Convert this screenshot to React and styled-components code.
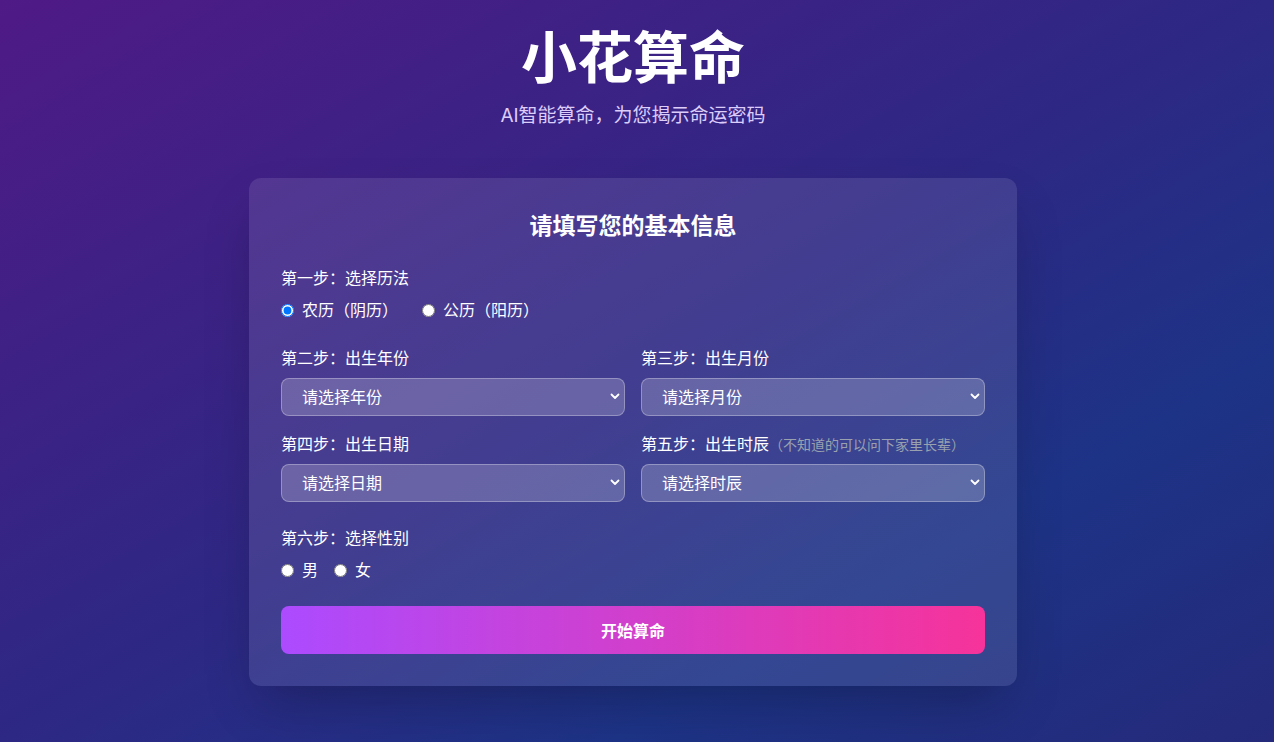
import styled, { createGlobalStyle } from "styled-components";

/* ---------- global ---------- */
const GlobalStyle = createGlobalStyle`
  * { box-sizing: border-box; }
  html, body { margin: 0; padding: 0; }
  body {
    font-family: "Inter", "Noto Sans CJK SC", sans-serif;
    color: #fff;
  }
`;

/* ---------- layout ---------- */
const Page = styled.div`
  min-height: 742px;
  background: linear-gradient(
    to bottom right,
    #4f1a86 0%,
    #2d2884 50%,
    #1d3386 74%,
    #252a7b 100%
  );
  padding: 30px 24px 32px 16px;
`;

const Header = styled.header`
  text-align: center;
  margin-bottom: 48px;
`;

const Title = styled.h1`
  margin: 0 0 16px;
  font-size: 56px;
  line-height: 1;
  font-weight: 700;
`;

const Subtitle = styled.p`
  margin: 0;
  font-size: 19px;
  line-height: 28px;
  color: #dccdfb;
`;

const Card = styled.section`
  width: 768px;
  margin: 0 auto;
  padding: 32px;
  border-radius: 12px;
  background: rgba(255, 255, 255, 0.1);
  box-shadow: 0 25px 50px -12px rgba(0, 0, 0, 0.25);
`;

const CardTitle = styled.h2`
  margin: 0 0 24px;
  text-align: center;
  font-size: 23px;
  line-height: 32px;
  font-weight: 700;
`;

const Step = styled.div`
  margin-bottom: ${(p) => p.$mb ?? 24}px;
`;

const Label = styled.div`
  font-size: 16px;
  line-height: 24px;
  height: 24px;
  margin-bottom: 8px;
`;

const Hint = styled.span`
  font-size: 14px;
  line-height: 1;
  color: #99a1af;
`;

const RadioRow = styled.div`
  display: flex;
  gap: ${(p) => p.$gap}px;
`;

const RadioLabel = styled.label`
  display: flex;
  align-items: center;
  gap: 8px;
  font-size: 16px;
  line-height: 24px;
`;

const Radio = styled.input`
  margin: 0;
  width: 13px;
  height: 13px;
`;

const Grid = styled.div`
  display: grid;
  grid-template-columns: 1fr 1fr;
  gap: 16px;
  margin-bottom: 24px;
`;

const SelectWrap = styled.div`
  position: relative;
`;

const Select = styled.select`
  appearance: none;
  width: 100%;
  height: 38px;
  padding: 0 28px 0 20px;
  border: 1px solid rgba(255, 255, 255, 0.3);
  border-radius: 8px;
  background: rgba(255, 255, 255, 0.2);
  color: #fff;
  font-family: inherit;
  font-size: 16px;
  outline: none;
`;

const Chevron = styled.svg`
  position: absolute;
  right: 5px;
  top: 15px;
  pointer-events: none;
`;

const Submit = styled.button`
  display: block;
  width: 100%;
  height: 48px;
  border: none;
  border-radius: 8px;
  background: linear-gradient(to right, #ac4bff, #f6339a);
  color: #fff;
  font-family: inherit;
  font-size: 16px;
  font-weight: 700;
  cursor: pointer;
`;

/* ---------- parts ---------- */
function Dropdown({ placeholder }) {
  return (
    <SelectWrap>
      <Select defaultValue="">
        <option value="">{placeholder}</option>
      </Select>
      <Chevron width="10" height="7" viewBox="0 0 10 7">
        <path d="M1.5 1.5 L5 5 L8.5 1.5" fill="none" stroke="#fff" strokeWidth="1.8" strokeLinecap="round" strokeLinejoin="round" />
      </Chevron>
    </SelectWrap>
  );
}

const fields = [
  { label: "第二步：出生年份", placeholder: "请选择年份" },
  { label: "第三步：出生月份", placeholder: "请选择月份" },
  { label: "第四步：出生日期", placeholder: "请选择日期" },
  { label: "第五步：出生时辰", hint: "（不知道的可以问下家里长辈）", placeholder: "请选择时辰" },
];

/* ---------- main ---------- */
export default function App() {
  return (
    <>
      <GlobalStyle />
      <Page>
        <Header>
          <Title>小花算命</Title>
          <Subtitle>AI智能算命，为您揭示命运密码</Subtitle>
        </Header>

        <Card>
          <CardTitle>请填写您的基本信息</CardTitle>

          <Step>
            <Label>第一步：选择历法</Label>
            <RadioRow $gap={24}>
              <RadioLabel>
                <Radio type="radio" name="calendar" defaultChecked />
                农历（阴历）
              </RadioLabel>
              <RadioLabel>
                <Radio type="radio" name="calendar" />
                公历（阳历）
              </RadioLabel>
            </RadioRow>
          </Step>

          <Grid>
            {fields.map(({ label, hint, placeholder }) => (
              <div key={label}>
                <Label>
                  {label}
                  {hint && <Hint>{hint}</Hint>}
                </Label>
                <Dropdown placeholder={placeholder} />
              </div>
            ))}
          </Grid>

          <Step>
            <Label>第六步：选择性别</Label>
            <RadioRow $gap={16}>
              <RadioLabel>
                <Radio type="radio" name="gender" />
                男
              </RadioLabel>
              <RadioLabel>
                <Radio type="radio" name="gender" />
                女
              </RadioLabel>
            </RadioRow>
          </Step>

          <Submit type="button">开始算命</Submit>
        </Card>
      </Page>
    </>
  );
}
